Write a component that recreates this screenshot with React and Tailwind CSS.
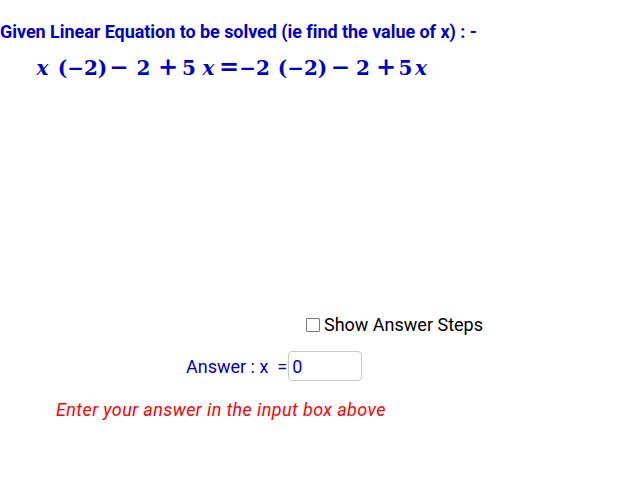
export default function App() {
  return (
    <div className="w-[630px] h-[480px] bg-white overflow-hidden" style={{ fontFamily: "Roboto, sans-serif" }}>
      <div className="pt-[20px] text-[18px] leading-[24px] font-bold text-[#0000cc] tracking-[-0.05px] whitespace-nowrap">
        Given Linear Equation to be solved (ie find the value of x) : -
      </div>

      {/* equation, each token sits in its own box */}
      <div className="mt-[10px] h-[26px] flex items-baseline text-[20px] leading-[26px] font-bold text-[#0000cc] whitespace-nowrap" style={{ fontFamily: '"DejaVu Serif", serif' }}>
        <span className="ml-[37px] w-[11px] flex justify-center italic">x</span>
        <span className="ml-[12px] w-[45px] flex justify-center">(−2)</span>
        <span className="ml-[7px] w-[14px] flex justify-center text-[23px]">−</span>
        <span className="ml-[11px] w-[13px] flex justify-center">2</span>
        <span className="ml-[9px] w-[18px] flex justify-center text-[24px]">+</span>
        <span className="ml-[6px] w-[12px] flex justify-center">5</span>
        <span className="ml-[7px] w-[13px] flex justify-center italic">x</span>
        <span className="ml-[5px] w-[18px] flex justify-center text-[24px]">=</span>
        <span className="ml-[2px] w-[29px] flex justify-center">−2</span>
        <span className="ml-[11px] w-[45px] flex justify-center">(−2)</span>
        <span className="ml-[9px] w-[13px] flex justify-center text-[23px]">−</span>
        <span className="ml-[10px] w-[12px] flex justify-center">2</span>
        <span className="ml-[8px] w-[18px] flex justify-center text-[24px]">+</span>
        <span className="ml-[4px] w-[13px] flex justify-center">5</span>
        <span className="ml-[3px] w-[12px] flex justify-center italic">x</span>
      </div>

      <label className="mt-[235px] ml-[306px] flex items-center gap-[4px] text-[18px] leading-[20px] text-black whitespace-nowrap w-fit">
        <span className="w-[14px] h-[14px] border border-[#777] rounded-[1px] bg-white" />
        Show Answer Steps
      </label>

      <div className="mt-[16px] ml-[186px] flex items-center text-[18px] text-[#0000cc] whitespace-nowrap">
        <span>Answer : x&nbsp;&nbsp;=</span>
        <div className="ml-[1px] w-[74px] h-[30px] border border-[#c8c8c8] rounded-[4px] flex items-center pl-[3px] text-[#0000cc]">0</div>
      </div>

      <div className="mt-[17px] ml-[56px] text-[18px] leading-[24px] italic tracking-[0.4px] text-[#ff0000] whitespace-nowrap">
        Enter your answer in the input box above
      </div>
    </div>
  );
}
